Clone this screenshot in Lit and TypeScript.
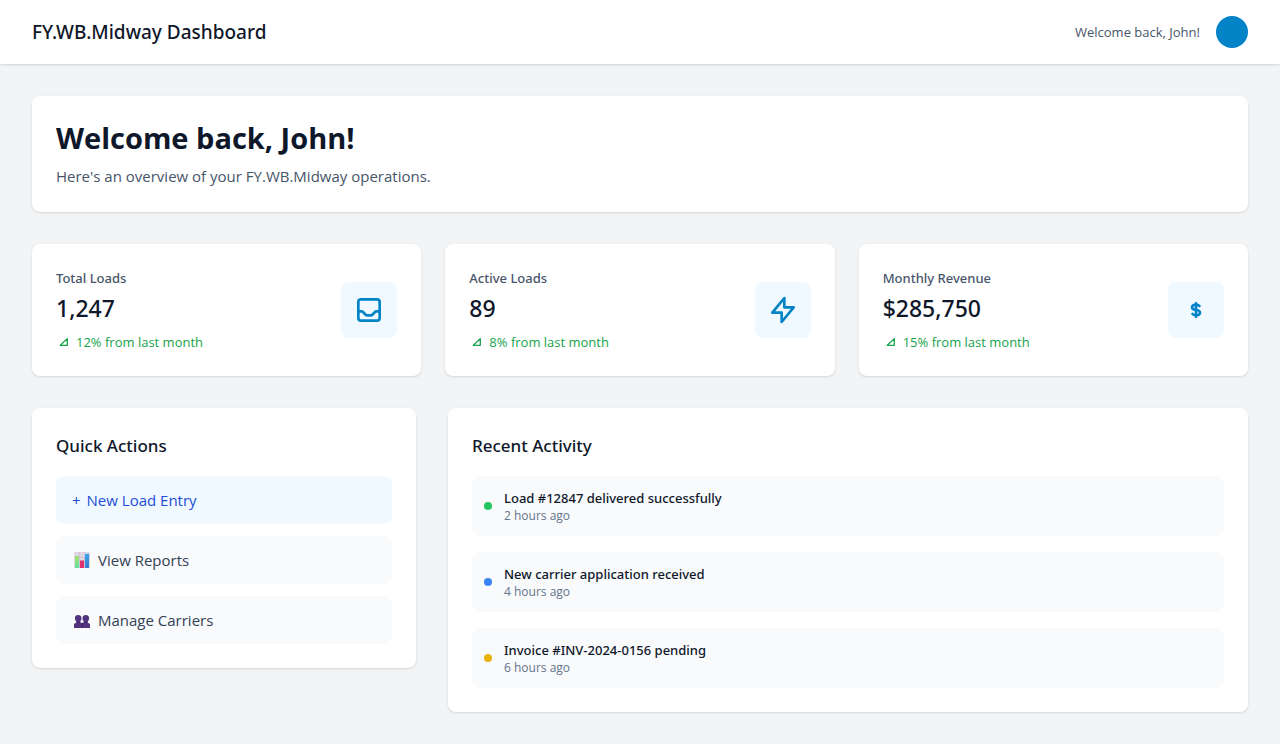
import { LitElement, html, svg, css } from "lit";
import { customElement } from "lit/decorators.js";
import { classMap } from "lit/directives/class-map.js";

const inbox = svg`<path d="M20 13V6a2 2 0 00-2-2H6a2 2 0 00-2 2v7m16 0v5a2 2 0 01-2 2H6a2 2 0 01-2-2v-5m16 0h-2.586a1 1 0 00-.707.293l-2.414 2.414a1 1 0 01-.707.293h-3.172a1 1 0 01-.707-.293l-2.414-2.414A1 1 0 006.586 13H4"/>`;
const bolt = svg`<path d="M13 10V3L4 14h7v7l9-11h-7z"/>`;
const dollar = svg`<path d="M12 8c-1.657 0-3 .895-3 2s1.343 2 3 2 3 .895 3 2-1.343 2-3 2m0-8c1.11 0 2.08.402 2.599 1M12 8V7m0 1v8m0 0v1m0-1c-1.11 0-2.08-.402-2.599-1"/>`;

const stats = [
  { label: "Total Loads", value: "1,247", trend: "12% from last month", icon: inbox },
  { label: "Active Loads", value: "89", trend: "8% from last month", icon: bolt },
  { label: "Monthly Revenue", value: "$285,750", trend: "15% from last month", icon: dollar },
];

const chart = html`<svg class="glyph" viewBox="0 0 16 16" aria-hidden="true">
  <defs>
    <linearGradient id="g" x1="0" y1="0" x2="0" y2="1"><stop offset="0" stop-color="#a5e06a"/><stop offset="1" stop-color="#5fe39a"/></linearGradient>
    <linearGradient id="b" x1="0" y1="0" x2="0" y2="1"><stop offset="0" stop-color="#35a6ee"/><stop offset="1" stop-color="#3b7ccb"/></linearGradient>
  </defs>
  <rect width="16" height="16" rx="1" fill="#dcd7e3"/>
  <path d="M0 5.500h16M5.500 0v16M10.500 0v16" stroke="#c6bfd0" stroke-width=".7"/>
  <path d="M1 4h4v12H1z" fill="url(#g)"/>
  <path d="M6 8.500h4V16H6z" fill="#e0306f"/>
  <path d="M11 2h4v14h-4z" fill="url(#b)"/>
</svg>`;

const people = html`<svg class="glyph" viewBox="0 0 16 16" aria-hidden="true">
  <g fill="#533380">
    <path d="M4.200 3c2 0 3.300 1.200 3.300 3.200 0 1.500-.5 2.500-1.200 3.100v.9l1.700.8v5H0v-3c0-.9.300-1.400 1-1.700l1.200-.5V9.300C1.500 8.700.9 7.700.9 6.200.9 4.200 2.200 3 4.200 3z"/>
    <path d="M11.800 3c2 0 3.300 1.200 3.300 3.200 0 1.500-.6 2.500-1.300 3.100v1.500l1.200.5c.7.300 1 .8 1 1.700v3H8v-5l1.700-.8v-.9c-.7-.6-1.200-1.600-1.200-3.100C8.500 4.200 9.800 3 11.800 3z"/>
  </g>
  <path d="M2.500 10q1.700 1.500 3.400 0M10.100 10q1.700 1.500 3.400 0M8 11v5" fill="none" stroke="#38205c" stroke-width=".8"/>
</svg>`;

const actions = [
  { text: "New Load Entry", icon: html`<span>+</span>`, primary: true },
  { text: "View Reports", icon: chart, primary: false },
  { text: "Manage Carriers", icon: people, primary: false },
];

const activity = [
  { title: "Load #12847 delivered successfully", time: "2 hours ago", tone: "green" },
  { title: "New carrier application received", time: "4 hours ago", tone: "blue" },
  { title: "Invoice #INV-2024-0156 pending", time: "6 hours ago", tone: "yellow" },
];

@customElement("app-root")
export class AppRoot extends LitElement {
  static styles = css`
    :host {
      display: block;
      min-height: 100vh;
      background: #f3f4f6;
      color: #0f172a;
      font: 15px/24px "Segoe UI", "Open Sans", "Noto Sans", sans-serif;
    }
    *, *::before { box-sizing: border-box; }
    h1, h2, p, ul { margin: 0; padding: 0; }
    ul { list-style: none; }
    .bar {
      display: flex;
      align-items: center;
      justify-content: space-between;
      height: 64px;
      padding: 0 32px;
      background: #fff;
      box-shadow: 0 1px 3px rgb(0 0 0 / 0.1), 0 1px 2px -1px rgb(0 0 0 / 0.1);
    }
    .brand, .label, .value, .title, .what { font-family: "Segoe UI", "Noto Sans", sans-serif; font-weight: 500; }
    .brand { font-size: 19px; line-height: 28px; }
    .user { display: flex; align-items: center; gap: 16px; font-size: 13px; line-height: 20px; color: #475569; }
    .avatar { width: 32px; height: 32px; border-radius: 50%; background: #0284c7; }
    main { display: grid; gap: 32px; padding: 32px; }
    .card {
      padding: 24px;
      border-radius: 8px;
      background: #fff;
      box-shadow: 0 1px 3px rgb(0 0 0 / 0.1), 0 1px 2px -1px rgb(0 0 0 / 0.1);
    }
    .hello { margin-bottom: 8px; font-size: 29px; line-height: 36px; font-weight: 700; }
    .lead { color: #475569; }
    .stats { display: grid; grid-template-columns: repeat(3, 1fr); gap: 24px; }
    .stat { display: flex; align-items: center; justify-content: space-between; }
    .label { font-size: 13px; line-height: 20px; color: #475569; }
    .value { margin: 4px 0 8px; font-size: 23px; line-height: 32px; }
    .trend { display: flex; align-items: center; gap: 4px; font-size: 13px; line-height: 20px; color: #16a34a; }
    .trend svg { width: 16px; height: 16px; }
    .tile { display: grid; place-items: center; width: 56px; height: 56px; border-radius: 8px; background: #f0f9ff; color: #0284c7; }
    .tile svg { width: 32px; height: 32px; }
    .line { fill: none; stroke: currentColor; stroke-width: 2; stroke-linecap: round; stroke-linejoin: round; }
    .panels { display: grid; grid-template-columns: repeat(3, 1fr); gap: 32px; align-items: start; }
    .wide { grid-column: span 2; }
    .title { margin-bottom: 16px; font-size: 17px; line-height: 28px; }
    .actions { display: grid; gap: 12px; }
    .action {
      display: flex;
      align-items: center;
      gap: 8px;
      width: 100%;
      padding: 12px 16px;
      border: 0;
      border-radius: 8px;
      background: #f8fafc;
      color: #334155;
      font: inherit;
      text-align: left;
      cursor: pointer;
    }
    .primary { gap: 6px; background: #f0f9ff; color: #1d4ed8; }
    .glyph { width: 16px; height: 16px; margin-left: 2px; }
    .feed { display: grid; gap: 16px; }
    .event { display: flex; align-items: center; gap: 12px; padding: 12px; border-radius: 8px; background: #f8fafc; }
    .dot { width: 8px; height: 8px; border-radius: 50%; }
    .green { background: #22c55e; }
    .blue { background: #3b82f6; }
    .yellow { background: #eab308; }
    .what { font-size: 13px; line-height: 20px; }
    .when { font-size: 12px; line-height: 16px; color: #64748b; }
  `;

  render() {
    return html`
      <header class="bar">
        <h1 class="brand">FY.WB.Midway Dashboard</h1>
        <div class="user"><span>Welcome back, John!</span><span class="avatar"></span></div>
      </header>
      <main>
        <section class="card">
          <h2 class="hello">Welcome back, John!</h2>
          <p class="lead">Here's an overview of your FY.WB.Midway operations.</p>
        </section>
        <section class="stats">
          ${stats.map((s) => html`
            <div class="card stat">
              <div>
                <p class="label">${s.label}</p>
                <p class="value">${s.value}</p>
                <p class="trend">
                  <svg viewBox="0 0 16 16" aria-hidden="true"><path d="M4.300 11.300h7V4.600z" fill="none" stroke="currentColor" stroke-width="1.300" stroke-linejoin="round"/></svg>
                  <span>${s.trend}</span>
                </p>
              </div>
              <div class="tile"><svg class="line" viewBox="0 0 24 24" aria-hidden="true">${s.icon}</svg></div>
            </div>`)}
        </section>
        <div class="panels">
          <section class="card">
            <h2 class="title">Quick Actions</h2>
            <div class="actions">
              ${actions.map((a) => html`<button type="button" class=${classMap({ action: true, primary: a.primary })}>${a.icon}<span>${a.text}</span></button>`)}
            </div>
          </section>
          <section class="card wide">
            <h2 class="title">Recent Activity</h2>
            <ul class="feed">
              ${activity.map((e) => html`
                <li class="event">
                  <span class=${classMap({ dot: true, [e.tone]: true })}></span>
                  <div><p class="what">${e.title}</p><p class="when">${e.time}</p></div>
                </li>`)}
            </ul>
          </section>
        </div>
      </main>
    `;
  }
}
